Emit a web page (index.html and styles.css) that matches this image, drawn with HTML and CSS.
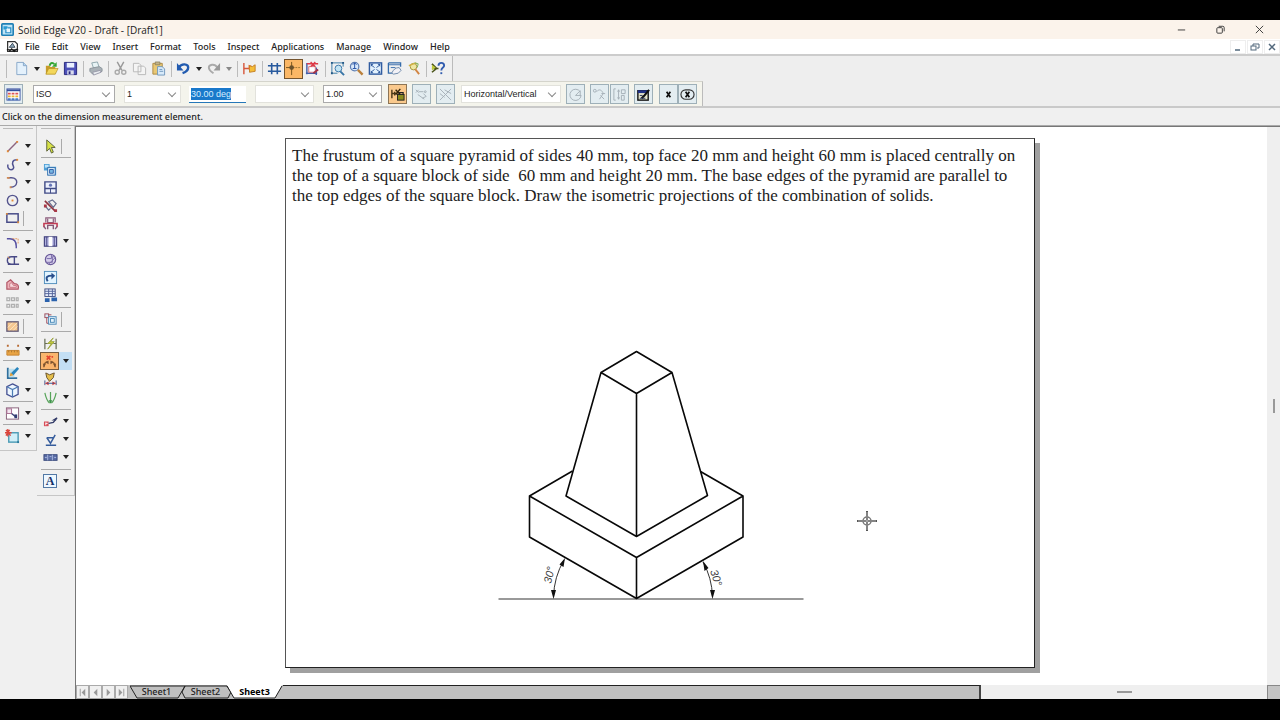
FILE: index.html
```html
<!DOCTYPE html>
<html lang="en">
<head>
<meta charset="utf-8">
<title>Solid Edge V20 - Draft - [Draft1]</title>
<link rel="stylesheet" href="styles.css">
</head>
<body>
<div class="app">
<header class="titlebar">
  <svg class="ico" viewBox="0 0 16 16"><rect x="1" y="1" width="14" height="14" rx="1" fill="#bfe4f5" stroke="#1f7fb5" stroke-width="2"/><path d="M3 4h5v4H3z" fill="#2b9bd3"/><path d="M8 6h4v6H6V8" stroke="#2b8fc8" fill="#e8f6fc" stroke-width="1.500"/></svg>
  <h1>Solid Edge V20 - Draft - [Draft1]</h1>
  <div class="winbtns">
    <button aria-label="Minimize"><svg viewBox="0 0 12 12"><path d="M2 6.500h8" /></svg></button>
    <button aria-label="Restore"><svg viewBox="0 0 12 12"><rect x="2" y="4" width="6" height="6" rx="1"/><path d="M4 2.500h4.500a1.500 1.500 0 0 1 1.500 1.500v4"/></svg></button>
    <button aria-label="Close"><svg viewBox="0 0 12 12"><path d="M2 2l8 8M10 2l-8 8"/></svg></button>
  </div>
</header>
<nav class="menubar">
  <svg class="ico" viewBox="0 0 16 16"><path d="M2 2h9l3 3v9H2z" fill="#fff" stroke="#333" stroke-width="1.500"/><path d="M4 9l4-5 3 5z" fill="#8fa9ba" stroke="#234"/><path d="M1 12h14M4 14l3-3 3 3 3-3" stroke="#111" fill="none" stroke-width="1.500"/></svg>
  <button>File</button><button>Edit</button><button>View</button><button>Insert</button><button>Format</button><button>Tools</button><button>Inspect</button><button>Applications</button><button>Manage</button><button>Window</button><button>Help</button>
  <div class="docbtns">
    <button aria-label="Minimize document"><svg viewBox="0 0 12 12"><path d="M3 9h5"/></svg></button>
    <button aria-label="Restore document"><svg class="thin" viewBox="0 0 12 12"><rect x="2" y="5" width="5" height="4"/><path d="M4 3h6v4H8M4 3v2"/></svg></button>
    <button aria-label="Close document"><svg viewBox="0 0 12 12"><path d="M3 3l6 6M9 3l-6 6"/></svg></button>
  </div>
</nav>

<div class="bars">
<div class="toolbar main-tools">
  <button class="tool" aria-label="New"><svg viewBox="0 0 16 16"><path d="M3 1.500h7l3.500 3.500v9.500H3z" fill="#e4f1fc" stroke="#86a6c8"/><path d="M10 1.500V5h3.500" fill="#b8d6f1" stroke="#86a6c8"/></svg></button>
  <button class="drop" aria-label="New options"></button>
  <button class="tool" aria-label="Open"><svg viewBox="0 0 16 16"><path d="M2 5h4l1 1.500h5V14H2z" fill="#c79b28"/><path d="M2 14l3-6h10l-3 6z" fill="#f3d75a" stroke="#b38f25" stroke-width=".7"/><path d="M6 5c1-4 4-3 5-1.500" fill="none" stroke="#33a533" stroke-width="2"/><path d="M13.500 1v5h-5z" fill="#33a533"/></svg></button>
  <button class="tool" aria-label="Save"><svg viewBox="0 0 16 16"><path d="M1.500 1.500h13v13h-13z" fill="#4c50b8" stroke="#26267c"/><path d="M4 2h8v5H4z" fill="#eaf0ff"/><path d="M4.500 10h7v4.500h-7z" fill="#d9dcee"/><path d="M6 11h2v3H6z" fill="#26267c"/></svg></button>
  <i class="vsep"></i>
  <button class="tool" aria-label="Print"><svg viewBox="0 0 16 16"><path d="M4 2l6-1 2 6-6 1z" fill="#e7f3f5" stroke="#8da5ac"/><path d="M2 8l10-2 3 2v3l-10 3-3-3z" fill="#a9b1b7" stroke="#8a939a"/><path d="M5 12l8-2 1 2-8 3z" fill="#e9edf0" stroke="#99a"/></svg></button>
  <i class="vsep"></i>
  <button class="tool" aria-label="Cut"><svg viewBox="0 0 16 16"><path d="M4.500 1l5 9M11.500 1l-5 9" stroke="#999" stroke-width="1.500"/><circle cx="4.500" cy="12" r="2.200" fill="none" stroke="#aaa" stroke-width="1.500"/><circle cx="11.500" cy="12" r="2.200" fill="none" stroke="#aaa" stroke-width="1.500"/></svg></button>
  <button class="tool" aria-label="Copy"><svg viewBox="0 0 16 16"><path d="M1.500 2.500h6l2 2v7h-8zM6.500 5.500h6l2 2v7h-8z" fill="#f4f4f4" stroke="#b9b9b9"/></svg></button>
  <button class="tool" aria-label="Paste"><svg viewBox="0 0 16 16"><path d="M2 2.500h10V14H2z" fill="#e9c874" stroke="#ad8a44"/><path d="M4.500 1h5v3h-5z" fill="#c4b387" stroke="#7c7455" stroke-width=".7"/><path d="M7 6h5l2.500 2.500V15H7z" fill="#d8eafa" stroke="#7097bd"/><path d="M9 9h3M9 11h4" stroke="#7097bd"/></svg></button>
  <i class="vsep"></i>
  <button class="tool" aria-label="Undo"><svg viewBox="0 0 16 16"><path d="M3 7c3-5 10-4 10 0 0 4-3 5-6 6" fill="none" stroke="#225bb0" stroke-width="2.500"/><path d="M1 2v8h7z" fill="#225bb0"/></svg></button>
  <button class="drop" aria-label="Undo history"></button>
  <button class="tool" aria-label="Redo"><svg viewBox="0 0 16 16"><path d="M12 7c-3-5-9-3-9 0 0 3 2 4 5 6" fill="none" stroke="#aaa" stroke-width="2"/><path d="M15 2v8H8z" fill="#999"/></svg></button>
  <button class="drop dim-arrow" aria-label="Redo history"></button>
  <i class="vsep"></i>
  <button class="tool" aria-label="Relationship assistant"><svg viewBox="0 0 16 16"><path d="M2 2v12M2 8h6" stroke="#d6563c" stroke-width="1.500"/><path d="M7 4l3 1v4H7z" fill="#e86a27"/><path d="M8 8V5l3 1 3-2v7l-6 1z" fill="#f5bd38" stroke="#c47f24"/></svg></button>
  <i class="vsep"></i>
  <button class="tool" aria-label="Grid"><svg viewBox="0 0 16 16"><path d="M5 2v12M11 2v12M1 5h14M1 11h14" stroke="#285a9e" stroke-width="1.700"/></svg></button>
  <button class="tool active" aria-label="Snap to grid"><svg viewBox="0 0 16 16"><path d="M6 1v14M0 7h9" stroke="#75531d"/><path d="M10 7h6" stroke="#9c7434" stroke-dasharray="2 1"/><circle cx="6" cy="7" r="2.500" fill="#6b512b"/></svg></button>
  <button class="tool" aria-label="Reposition origin"><svg viewBox="0 0 16 16"><path d="M2 2v12M1 13h12M12 7v8" stroke="#435da8" stroke-width="1.500"/><path d="M4 6h7v6H4z" fill="#fff" stroke="#d26b79"/><path d="M6 1l5 5M11 1L6 6M2 3h12" stroke="#dd3947" stroke-width="1.500"/><path d="M9 13l5-4" stroke="#a33246" stroke-width="2"/></svg></button>
  <i class="vsep"></i>
  <button class="tool" aria-label="Zoom area"><svg viewBox="0 0 16 16"><path d="M2 2h12M2 2v11M14 2v4M2 13h6" stroke="#3579a4"/><circle cx="9" cy="8" r="3.600" fill="#c2e4f4" stroke="#3975a7"/><path d="M11 11l4 4" stroke="#3975a7" stroke-width="2"/><path d="M1 1h2v2H1zM13 1h2v2h-2zM1 12h2v2H1z" fill="#225584"/></svg></button>
  <button class="tool" aria-label="Zoom"><svg viewBox="0 0 16 16"><circle cx="6" cy="6" r="4.500" fill="#d9e9fb" stroke="#5f7fb4" stroke-width="1.300"/><path d="M6 2v6M4 4l2-2 2 2M4 8h4" stroke="#2551a5" fill="none"/><path d="M9.500 9.500l5 5" stroke="#ba803c" stroke-width="2.500"/></svg></button>
  <button class="tool" aria-label="Fit"><svg viewBox="0 0 16 16"><rect x="1.500" y="2" width="13" height="12" fill="#e2f1fd" stroke="#315ca0" stroke-width="1.500"/><path d="M3 4l4 3M13 4L9 7M3 12l4-3M13 12L9 9" stroke="#315ca0"/><path d="M3 3h3L3 6zM13 3h-3l3 3zM3 13h3l-3-3zM13 13h-3l3-3z" fill="#315ca0"/></svg></button>
  <button class="tool" aria-label="Pan"><svg viewBox="0 0 16 16"><path d="M1.500 2h13v4M1.500 2v11h4" fill="none" stroke="#366cab" stroke-width="1.400"/><path d="M2 4h12M4 7h5" stroke="#366cab"/><path d="M5 13c2-4 4-6 8-6l2 3-3 3-5 1z" fill="#f2f1f6" stroke="#6c87aa"/></svg></button>
  <button class="tool" aria-label="Zoom tool"><svg viewBox="0 0 16 16"><circle cx="8" cy="6" r="3.500" fill="#eee7a4" stroke="#a2953b"/><path d="M3 5l8-3" stroke="#d4b243" stroke-width="1.500"/><path d="M10 9l4 5" stroke="#d28542" stroke-width="2"/><path d="M9 2l4 1-1 4" stroke="#7bae53" fill="none"/></svg></button>
  <i class="vsep"></i>
  <button class="tool" aria-label="Help"><svg viewBox="0 0 16 16"><path d="M1 3l5 5-5 4M1 8h7" stroke="#4b541a" stroke-width="1.700" fill="none"/><path d="M1 4l4 3-4 3z" fill="#bfca3b"/><path d="M8 5c0-4 6-4 6 0 0 2-3 2-3 5" fill="none" stroke="#315caf" stroke-width="2"/><path d="M10 12h2v2h-2z" fill="#315caf"/></svg></button>
</div>

<div class="toolbar ribbon">
  <button class="rb" aria-label="Styles"><svg viewBox="0 0 16 16"><rect x="1" y="2" width="14" height="12" fill="#fff" stroke="#4359a5"/><path d="M1 3.500h14" stroke="#334e9c" stroke-width="2"/><path d="M2 7h12" stroke="#d55" stroke-width="2" stroke-dasharray="3 1"/><path d="M2 10h12" stroke="#e8b534" stroke-width="2" stroke-dasharray="3 1"/><path d="M2 13h12" stroke="#487bc4" stroke-width="2" stroke-dasharray="3 1"/></svg></button>
  <label class="combo w-iso strong"><select aria-label="Dimension style"><option>ISO</option></select></label>
  <label class="combo w-num"><select aria-label="Scale"><option>1</option></select></label>
  <label class="angle"><span class="sel">30.00 deg</span><input aria-label="Angle" type="text"></label>
  <label class="combo w-num wide"><select aria-label="Tolerance"><option></option></select></label>
  <label class="combo w-num wide strong"><select aria-label="Spacing"><option>1.00</option></select></label>
  <div class="rgroup">
  <button class="rb active" aria-label="Lock dimension"><svg viewBox="0 0 16 16"><path d="M2 3v9M2 7h6M5 5v4" stroke="#493817" stroke-width="1.500"/><path d="M6 3l5 5M11 2L6 8" stroke="#30240a" stroke-width="1.500"/><rect x="8" y="8" width="7" height="6" fill="#8a8c1e" stroke="#222"/><path d="M10 8V6h4v2" fill="none" stroke="#222" stroke-width="1.300"/></svg></button>
  <button class="rb" aria-label="Dimension axis"><svg class="faded" viewBox="0 0 16 16"><path d="M2 3l3 3M2 6l3-3M5 5h5M9 12l4-2M4 8l7 5M10 7l3 3"/><circle cx="12" cy="5" r="1"/></svg></button>
  <button class="rb" aria-label="Intersection"><svg class="faded" viewBox="0 0 16 16"><path d="M2 2l12 12M14 2L2 14M7 3l7 4M2 7l5 4"/></svg></button>
  </div>
  <label class="combo w-orient"><select aria-label="Orientation"><option>Horizontal/Vertical</option></select></label>
  <button class="rb" aria-label="Major minor"><svg class="faded" viewBox="0 0 16 16"><path d="M13 5a6 6 0 1 0 1 4H8l5-5v5" /></svg></button>
  <button class="rb" aria-label="Arc angle"><svg class="faded" viewBox="0 0 16 16"><circle cx="3" cy="4" r="1.500"/><path d="M5 5c3-4 6-1 7 2l-4 6M9 9l4 4M10 7h4"/></svg></button>
  <button class="rb joined" aria-label="Dual dimension"><svg class="faded" viewBox="0 0 16 16"><path d="M4 2H2v12h2M7 3v10M6 5l1-2 1 2M6 11l1 2 1-2M10 3h4v4h-4zM10 9h3v5h-3z"/></svg></button>
  <button class="rb" aria-label="Properties"><svg viewBox="0 0 16 16"><rect x="2" y="4" width="11" height="10" fill="#e6e6cc" stroke="#111" stroke-width="1.500"/><path d="M2 5h10" stroke="#223285" stroke-width="3"/><path d="M6 12l3-3 5-6" stroke="#111" stroke-width="2.200" fill="none"/><path d="M4 9h3M4 12h6" stroke="#22305a"/></svg></button>
  <button class="rb last" aria-label="Tolerance type"><svg viewBox="0 0 16 16"><path d="M6 5l4 6M10 5l-4 6" stroke="#111" stroke-width="1.800"/></svg></button>
  <button class="rb flush" aria-label="Inspection"><svg viewBox="0 0 16 16"><rect x="1" y="3" width="14" height="10" rx="5" fill="none" stroke="#333" stroke-width="1.200"/><path d="M6 5l4 6M10 5l-4 6" stroke="#111" stroke-width="1.800"/></svg></button>
</div>
</div>

<div class="prompt" role="status">Click on the dimension measurement element.</div>

<main class="workspace">
<aside class="palettes">
<div class="palette draw">
  <div class="row"><button aria-label="Line"><svg viewBox="0 0 16 16"><path d="M3 13L13 3" stroke="#8b6480" stroke-width="1.500"/><path d="M2 12h2v2H2zM12 2h2v2h-2z" fill="#e28a37"/></svg></button><button class="drop" aria-label="Line options"></button></div>
  <div class="row"><button aria-label="Curve"><svg viewBox="0 0 16 16"><path d="M3 8c-1 8 8 6 6 2S8 3 13 3" fill="none" stroke="#4f5190" stroke-width="1.600"/><path d="M12 2h2v2h-2z" fill="#e28a37"/></svg></button><button class="drop" aria-label="Curve options"></button></div>
  <div class="row"><button aria-label="Arc"><svg viewBox="0 0 16 16"><path d="M3 3h4c8 0 7 10-1 10" fill="none" stroke="#55548e" stroke-width="1.500"/><path d="M2 2h3v2H2zM5 12h2v2H5z" fill="#d18a54"/></svg></button><button class="drop" aria-label="Arc options"></button></div>
  <div class="row"><button aria-label="Circle"><svg viewBox="0 0 16 16"><circle cx="8" cy="8" r="5.500" fill="none" stroke="#55558e" stroke-width="1.500"/><path d="M7 7h2v2H7z" fill="#e28a37"/></svg></button><button class="drop" aria-label="Circle options"></button></div>
  <div class="row"><button aria-label="Rectangle"><svg viewBox="0 0 16 16"><rect x="2" y="3" width="12" height="9" fill="none" stroke="#484c88" stroke-width="1.600"/><path d="M1 2h2v2H1zM13 11h2v2h-2z" fill="#d48946"/></svg></button><i class="bar"></i></div>
  <hr>
  <div class="row"><button aria-label="Fillet"><svg viewBox="0 0 16 16"><path d="M2 4h3c5 0 7 3 7 8v2" fill="none" stroke="#544ea0" stroke-width="1.500"/><path d="M8 4h6v5" fill="none" stroke="#e49357" stroke-dasharray="2 1"/></svg></button><button class="drop" aria-label="Fillet options"></button></div>
  <div class="row"><button aria-label="Trim"><svg viewBox="0 0 16 16"><path d="M13 4H7c-6 0-6 8 0 8h6M10 4v8M3 12h12" fill="none" stroke="#484986" stroke-width="1.500"/><path d="M3 4l2 2" stroke="#e0893d"/></svg></button><button class="drop" aria-label="Trim options"></button></div>
  <hr>
  <div class="row"><button aria-label="Offset"><svg viewBox="0 0 16 16"><path d="M2 13V6l4-3 4 4c4 0 5 3 4 6z" fill="#efb2ba" stroke="#b25867" stroke-width="1.300"/><path d="M5 11V7l2-1 2 3h3v2z" fill="#f8d8dc" stroke="#c77782"/></svg></button><button class="drop" aria-label="Offset options"></button></div>
  <div class="row"><button aria-label="Pattern"><svg viewBox="0 0 16 16"><g fill="none" stroke="#b0b0b0" stroke-width="1.300"><rect x="2" y="3" width="3" height="3"/><rect x="7" y="3" width="3" height="3"/><rect x="12" y="3" width="2" height="3"/><rect x="2" y="10" width="3" height="3"/><rect x="7" y="10" width="3" height="3"/><rect x="12" y="10" width="2" height="3"/></g></svg></button><button class="drop" aria-label="Pattern options"></button></div>
  <hr>
  <div class="row"><button aria-label="Fill"><svg viewBox="0 0 16 16"><rect x="2" y="3" width="12" height="10" fill="#f6c790" stroke="#625a77" stroke-width="1.400"/><path d="M3 9l5-5M5 12l8-8M9 12l4-4" stroke="#fbe6c8"/></svg></button><i class="bar"></i></div>
  <hr class="tight">
  <div class="row"><button aria-label="Measure"><svg viewBox="0 0 16 16"><path d="M2 9h13v5H2z" fill="#e9a444" stroke="#c78430"/><path d="M4 9v2M7 9v2M10 9v2M13 9v2" stroke="#a87530"/><path d="M2 3h2v2H2zM13 3h2v2h-2z" fill="#b86b34"/></svg></button><button class="drop" aria-label="Measure options"></button></div>
  <hr class="tight">
  <div class="row"><button aria-label="Sketch"><svg viewBox="0 0 16 16"><path d="M3 3v11h10" fill="none" stroke="#30709e" stroke-width="2"/><path d="M4 4h6v9H4z" fill="#bce0ef"/><path d="M6 9l7-7 2 2-6 7z" fill="#2a85bd"/><path d="M5 12l1-4 3 3z" fill="#e59e35"/></svg></button></div>
  <div class="row"><button aria-label="3D view"><svg viewBox="0 0 16 16"><path d="M8 1l6 3v8l-6 3-6-3V4z" fill="#eef7ff" stroke="#465293" stroke-width="1.400"/><path d="M2 4l6 3 6-3M8 7v8" fill="none" stroke="#4c7cb5" stroke-width="1.300"/></svg></button><button class="drop" aria-label="3D view options"></button></div>
  <hr class="tight">
  <div class="row"><button aria-label="Scale"><svg viewBox="0 0 16 16"><rect x="1.500" y="2" width="13" height="12" fill="#fff" stroke="#865f78"/><rect x="2" y="3" width="5" height="5" fill="#f3e7f0" stroke="#a86c90"/><path d="M7 8l5 4" stroke="#3d4176" stroke-width="1.500"/><path d="M10 9h3v4h-3z" fill="#333d73"/></svg></button><button class="drop" aria-label="Scale options"></button></div>
  <hr class="tight">
  <div class="row"><button aria-label="Create block"><svg viewBox="0 0 16 16"><rect x="4" y="4" width="10" height="10" fill="#d1eff8" stroke="#4b9bb5" stroke-width="1.500"/><path d="M3 0v8M0 4h7M1 1l5 6M5 1L1 7" stroke="#db443b" stroke-width="1.400"/><path d="M13 13h2v2h-2z" fill="#29799d"/></svg></button><button class="drop" aria-label="Block options"></button></div>
</div>

<div class="palette detail">
  <div class="row"><button aria-label="Select"><svg viewBox="0 0 16 16"><path d="M4 1v12l3-3 2 5 2-1-2-5h4z" fill="#d7e247" stroke="#5a6038"/></svg></button><i class="bar"></i></div>
  <hr class="tight">
  <div class="row"><button aria-label="View wizard"><svg viewBox="0 0 16 16"><path d="M1 2h6v3h7v9H5V9H1z" fill="#4d9ed5"/><path d="M2 3h4v3H2z" fill="#bce3fa"/><rect x="5" y="6" width="8" height="8" fill="#e2f2fd" stroke="#2f6dad"/><path d="M7 8h4v4H7z" fill="#77b8e4" stroke="#315da5"/></svg></button></div>
  <div class="row"><button aria-label="Principal view"><svg viewBox="0 0 16 16"><path d="M2 2h12v12H2zM2 9h12" fill="#edf1fc" stroke="#404b86" stroke-width="1.500"/><path d="M8 9v5" stroke="#404b86"/><circle cx="8" cy="5.500" r="1.700" fill="#6575b6"/></svg></button></div>
  <div class="row"><button aria-label="Auxiliary view"><svg viewBox="0 0 16 16"><path d="M2 3l11 11" stroke="#8c3340" stroke-width="1.700"/><path d="M6 4l4-2 4 4-3 4zM2 8l4 5 2-2" fill="none" stroke="#666d8e" stroke-width="1.300"/><path d="M1 7h3v3H1zM12 12h3v3h-3z" fill="#a93745"/></svg></button></div>
  <div class="row"><button aria-label="Cutting plane"><svg viewBox="0 0 16 16"><path d="M3 7V2h10v5M5 3v4h6V3" fill="none" stroke="#8c5c7c" stroke-width="1.300"/><path d="M1 12V8h14v4" fill="none" stroke="#c23c54" stroke-width="1.700"/><path d="M1 11l2 3M15 11l-2 3M5 14v-4h6v4" stroke="#865978" stroke-width="1.500" fill="none"/></svg></button></div>
  <div class="row"><button aria-label="Section view"><svg viewBox="0 0 16 16"><rect x="1.500" y="3" width="13" height="10" fill="#b1b2e1" stroke="#474781" stroke-width="1.300"/><path d="M6 3h4v10H6z" fill="#fff"/><path d="M4 3v10M12 3v10" stroke="#474781"/></svg></button><button class="drop" aria-label="Section options"></button></div>
  <div class="row"><button aria-label="Detail view"><svg viewBox="0 0 16 16"><circle cx="8" cy="8" r="5.500" fill="#d6cfeb" stroke="#6b5b9a" stroke-width="1.300"/><path d="M4 7h5V3M3 11h7V5h3M6 13l7-7" fill="none" stroke="#796ba7"/></svg></button></div>
  <div class="row"><button aria-label="Update views"><svg viewBox="0 0 16 16"><rect x="1.500" y="1.500" width="13" height="13" fill="#e2f4ff" stroke="#4f8dbb"/><path d="M5 12c-3-5 0-6 5-6" fill="none" stroke="#284e8c" stroke-width="2"/><path d="M9 3l4 3-4 4z" fill="#284e8c"/></svg></button></div>
  <div class="row"><button aria-label="Parts list"><svg viewBox="0 0 16 16"><rect x="2" y="1" width="11" height="8" fill="#e7effd" stroke="#414d80"/><path d="M2 3.500h11M2 6h11M6 1v8M10 1v8" stroke="#52639a"/><path d="M2 11h5v4H2zM9 10h6v4H9z" fill="#2b62ad"/></svg></button><button class="drop" aria-label="Parts list options"></button></div>
  <hr>
  <div class="row"><button aria-label="Retrieve dimensions"><svg viewBox="0 0 16 16"><rect x="2" y="2" width="4" height="4" fill="#dcecf8" stroke="#9d4b5a"/><path d="M4 6v6h4M6 3h3" stroke="#9d4b5a" fill="none"/><rect x="6" y="5" width="8" height="8" fill="#e7f5fd" stroke="#4988b7"/><rect x="8" y="7" width="4" height="4" fill="none" stroke="#4988b7"/></svg></button><i class="bar"></i></div>
  <hr>
  <div class="row"><button aria-label="Smart dimension"><svg viewBox="0 0 16 16"><path d="M2 3v11M14 3v11M2 8h3M11 8h3" stroke="#686e56" stroke-width="1.300"/><path d="M11 2L5 8h4l-4 6 7-8H8z" fill="#c6cf3a" stroke="#8f982a" stroke-width=".8"/></svg></button></div>
  <div class="row on"><button class="active" aria-label="Angle between"><svg viewBox="0 0 16 16"><path d="M5 2l4 4M9 2L5 6M11 2v2" stroke="#e3442f" stroke-width="1.700"/><path d="M2 14c0-3 1-5 4-6M14 14c0-3-1-5-4-6" stroke="#94612d" fill="none" stroke-width="1.500"/><path d="M1 10l3 1-2 3zM15 10l-3 1 2 3zM7 7v4L4 9zM9 7v4l3-2z" fill="#795131"/></svg></button><button class="drop" aria-label="Dimension options"></button></div>
  <div class="row"><button aria-label="Attach dimension"><svg viewBox="0 0 16 16"><path d="M3 1l4 2 5-2-1 5-4 4-3-4z" fill="#e4be4c" stroke="#65502e"/><path d="M2 14V9M14 14V9" stroke="#3c4f86"/><path d="M2 12l4-2v4zM14 12l-4-2v4z" fill="#dc3c36"/><path d="M4 12h8" stroke="#38518d"/></svg></button></div>
  <div class="row"><button aria-label="Symmetric diameter"><svg viewBox="0 0 16 16"><path d="M2 3c1 5 2 8 5 11M14 3c-1 5-2 8-5 11M8 2v12" fill="none" stroke="#57a45a" stroke-width="1.300"/><path d="M6 11l2 3 2-3z" fill="#3b914a"/></svg></button><button class="drop" aria-label="Symmetric options"></button></div>
  <hr>
  <div class="row"><button aria-label="Callout"><svg viewBox="0 0 16 16"><path d="M1 8h5v5H1z" fill="#d84d58"/><path d="M3 10h2M3 9v3" stroke="#fff"/><path d="M6 10l5-1 4-5" stroke="#343d69" fill="none" stroke-width="1.500"/><path d="M9 7h5V4z" fill="#343d69"/></svg></button><button class="drop" aria-label="Callout options"></button></div>
  <div class="row"><button aria-label="Surface texture"><svg viewBox="0 0 16 16"><path d="M4 6l4 6 5-9M4 6h7M3 14h11" fill="none" stroke="#355c9c" stroke-width="1.600"/></svg></button><button class="drop" aria-label="Texture options"></button></div>
  <div class="row"><button aria-label="Feature control frame"><svg viewBox="0 0 16 16"><rect x="1" y="5" width="14" height="6" fill="#5d6fa8" stroke="#354779"/><path d="M5 5v6M10 5v6M2 8h2M7 7h2M12 8h2" stroke="#a9b8e0"/></svg></button><button class="drop" aria-label="Frame options"></button></div>
  <hr>
  <div class="row"><button class="texttool" aria-label="Text"><span>A</span></button><button class="drop" aria-label="Text options"></button></div>
</div>
</aside>

<section class="docview">
  <div class="viewport">
    <article class="sheet">
      <p>The frustum of a square pyramid of sides 40 mm, top face 20 mm and height 60 mm is placed centrally on
the top of a square block of side  60 mm and height 20 mm. The base edges of the pyramid are parallel to
the top edges of the square block. Draw the isometric projections of the combination of solids.</p>
      <svg class="drawing" viewBox="498 350 306 252" role="img" aria-label="Isometric projection of a frustum on a square block">
        <path d="M498.500 599H803.500" stroke="#777" stroke-width="1.500"/>
        <g fill="none" stroke="#080808" stroke-width="1.600" stroke-linejoin="round">
          <path d="M636.500 351.500L672 372.500 636.500 393.500 601 372.500zM636.500 393.500V536.500M601 372.500L566 496 636.500 536.500 707.500 495.500 672 372.500"/>
          <path d="M572.500 471L529.500 496 636.500 557.500 743 496 700.500 471.500M529.500 496V537L636.500 598.500 743 537V496M636.500 557.500V598.500"/>
        </g>
        <path d="M564 560Q554 577 553.500 597M703 562Q712 578 712.500 597" fill="none" stroke="#333"/>
        <path d="M565 558l-1.500 9-4-2.500zM553.500 599l-2.500-9h5zM703 561l5.500 7-4 3zM712.500 599l-2.500-9h5z" fill="#111"/>
        <text class="dim" transform="translate(551 584) rotate(-77)">30°</text>
        <text class="dim" transform="translate(710 571) rotate(72)">30°</text>
      </svg>
    </article>
    <svg class="cursor" viewBox="0 0 22 22"><circle cx="11" cy="11" r="4" fill="none" stroke="#777" stroke-width="1.500"/><path d="M11 1v20M1 11h20" stroke="#555" stroke-width="2"/><path d="M11 2v18M2 11h18" stroke="#ddd" stroke-width=".7"/></svg>
  </div>
  <div class="vscroll"><i></i></div>
  <footer class="sheetbar">
    <div class="sheetnav">
      <button aria-label="First sheet"><svg viewBox="0 0 12 12"><path d="M3 2v8h1V2zM9 2v8L5 6z"/></svg></button>
      <button aria-label="Previous sheet"><svg viewBox="0 0 12 12"><path d="M8 2v8L4 6z"/></svg></button>
      <button aria-label="Next sheet"><svg viewBox="0 0 12 12"><path d="M4 2v8l4-4z"/></svg></button>
      <button aria-label="Last sheet"><svg viewBox="0 0 12 12"><path d="M3 2v8l4-4zM8 2v8h1V2z"/></svg></button>
    </div>
    <div class="tabs">
      <svg class="tabshape" viewBox="0 0 153 14"><path d="M0 1L7 13H48L55 1M52 7L55 13H98L101 7 97 1" fill="#c0c0c0" stroke="#222"/><path d="M97 0L104 13H145L152 0z" fill="#fff"/><path d="M97 1L104 13H145L152 1" fill="none" stroke="#222"/><path d="M0 1H97M52 7L55 1" stroke="#222"/></svg>
      <button>Sheet1</button><button>Sheet2</button><button class="current">Sheet3</button>
    </div>
    <div class="filler"></div>
    <div class="hscroll"><i></i></div>
    <div class="corner"></div>
  </footer>
</section>
</main>
</div>
</body>
</html>
```
FILE: styles.css
```css
* { box-sizing: border-box; }
body { margin: 0; background: #000; font-family: "Noto Sans", "Open Sans", sans-serif; font-size: 9px; font-weight: 500; color: #222; }
button { border: 0; padding: 0; margin: 0; background: none; font: inherit; color: inherit; }
button svg { display: block; }
.app { height: 100vh; padding: 20px 0 21px; display: flex; flex-direction: column; }

.titlebar { display: flex; align-items: center; height: 19px; flex: none; background: #fbf3eb; padding-left: 1px; }
.ico { width: 13px; height: 13px; flex: none; }
.titlebar h1 { margin: 0 0 0 4px; font: 400 10px "Open Sans", sans-serif; white-space: nowrap; }
.winbtns { margin-left: auto; display: flex; padding-right: 1px; }
.winbtns button { width: 39px; display: grid; place-items: center; }
.winbtns svg { width: 11px; height: 11px; fill: none; stroke: #333; stroke-width: 1; }

.menubar { display: flex; align-items: center; height: 15px; flex: none; background: #fff; padding-left: 6px; white-space: nowrap; }
.menubar > button { margin-left: 12px; }
.menubar > .ico + button { margin-left: 6px; }
.docbtns { margin-left: auto; display: flex; gap: 1px; }
.docbtns button { width: 16px; height: 14px; border: 1px solid #eee; display: grid; place-items: center; }
.docbtns svg { width: 12px; height: 12px; fill: none; stroke: #52687c; stroke-width: 1.5; }
.docbtns .thin { stroke-width: 1; }

.bars { flex: none; background: #eee; border-top: 2px solid #ccc; border-bottom: 2px solid #c9c9c9; }
.toolbar { display: flex; align-items: center; width: max-content; border-right: 1px solid #bbb; }
.main-tools { height: 25px; padding: 0 4px 0 6px; background: #f0f0f0; }
.main-tools::before { content: ""; width: 1px; height: 18px; margin-right: 4px; border-left: 1px solid #bbb; }
.tool { width: 19px; height: 20px; display: grid; place-items: center; flex: none; }
.tool svg { width: 15px; height: 15px; }
.tool.active { background: #fbb766; border: 1px solid #74542f; }
.vsep { width: 6px; height: 16px; background: linear-gradient(#bcbcbc, #bcbcbc) center / 1px 100% no-repeat; }
.drop { width: 11px; height: 18px; display: grid; place-items: center; flex: none; }
.drop::before { content: ""; border: 3px solid transparent; border-top: 4px solid #222; border-bottom: 0; }
.drop.dim-arrow::before { border-top-color: #888; }

.ribbon { height: 25px; padding: 0 5px 0 4px; background: #f4f4ec; border-top: 1px solid #d4d4cc; }
.rb { width: 19px; height: 20px; display: grid; place-items: center; border: 1px solid #9eb0b8; background: #e3edf1; margin-left: 5px; flex: none; }
.rb:first-child { margin-left: 0; }
.rb svg { width: 15px; height: 15px; }
.rb.active { background: #fac98c; border-color: #8d7555; }
.rb.joined { margin-left: 1px; }
.rb.last { margin-left: 6px; }
.rb.flush { margin-left: 0; }
.rb .faded { fill: none; stroke: #a4afb6; stroke-width: 1; }
.rgroup { display: flex; margin: 0 6px; }
.combo { position: relative; height: 18px; margin-left: 9px; background: #fff; border: 1px solid #e2e2dc; display: block; }
.combo.strong { border-color: #aaa; }
.combo select { appearance: none; width: 100%; height: 100%; border: 0; background: transparent; font: 9px "Liberation Sans", Arial, sans-serif; color: #222; padding: 0 12px 0 2px; display: block; }
.combo::after { content: ""; position: absolute; right: 5px; top: 4px; width: 5px; height: 5px; border: solid #888; border-width: 0 1px 1px 0; transform: rotate(45deg); pointer-events: none; }
.w-iso { width: 82px; margin-left: 10px; }
.w-num { width: 57px; }
.w-num.wide { width: 59px; }
.w-orient { width: 100px; margin-left: 0; }
.angle { width: 57px; height: 17px; margin-left: 8px; display: flex; align-items: center; background: #fff; border-bottom: 1px solid #2577b8; padding-left: 2px; font: 9px/12px "Liberation Sans", Arial, sans-serif; }
.angle input { min-width: 0; flex: 1; width: 1px; border: 0; padding: 0; height: 12px; background: transparent; font: inherit; }
.sel { background: #1979ca; color: #d4eeff; white-space: nowrap; }

.prompt { height: 17px; flex: none; background: #f0f0f0; padding-left: 2px; line-height: 17px; }

.workspace { flex: 1; min-height: 0; display: flex; background: #f0f0f0; border-top: 1px solid #aaa; }
.palettes { display: flex; align-items: flex-start; flex: none; width: 75px; }
.palette { width: 37px; padding: 2px 0 5px 3px; border-right: 1px solid #c6c6c6; border-bottom: 1px solid #c6c6c6; }
.palette.detail { width: 38px; padding-left: 4px; }
.palette::before { content: ""; display: block; height: 2px; margin: 0 3px 6px 0; border-top: 1px solid #bbb; }
.row { display: flex; align-items: center; height: 18px; }
.row button { width: 18px; height: 18px; display: grid; place-items: center; flex: none; }
.row svg { width: 15px; height: 15px; }
.row .drop { width: 13px; }
.row .active { background: #fab56d; border: 1px solid #765b40; width: 19px; margin-left: -1px; }
.row.on .drop { background: #c3dff4; }
.bar { width: 1px; height: 15px; margin-left: 2px; background: #aaa; }
.palette hr { border: 0; height: 6px; margin: 0 3px 0 0; background: linear-gradient(#aaa, #aaa) center / 100% 1px no-repeat; }
.palette hr.tight { height: 5px; }
.texttool span { border: 1px solid #5278a5; background: #edf7ff; color: #152e67; font: bold 12px/13px "Liberation Serif", serif; width: 14px; height: 14px; display: block; text-align: center; }

.docview { flex: 1; min-width: 0; display: grid; grid-template-columns: 1fr 13px; grid-template-rows: 1fr 14px; border-left: 1px solid #777; border-top: 1px solid #777; }
.viewport { position: relative; background: #fff; padding: 11px 232px 17px 209px; min-width: 0; overflow: hidden; }
.sheet { height: 100%; background: #fff; border: 1px solid #555; border-bottom-color: #222; border-right-color: #222; box-shadow: 5px 5px 0 #a0a0a0; padding: 7px 6px; }
.sheet p { margin: 0; font: 17px/20px "Liberation Serif", "Times New Roman", serif; white-space: pre; color: #1c1c1c; }
.drawing { display: block; width: 306px; height: 252px; margin: 144px 0 0 206px; }
.dim { font: italic 11px "Liberation Sans", Arial, sans-serif; fill: #444; }
.cursor { position: absolute; left: 780px; top: 383px; width: 22px; height: 22px; }
.vscroll { background: #efefef; display: grid; place-items: center; }
.vscroll i { width: 2px; height: 14px; background: #999; }
.sheetbar { grid-column: 1 / 3; display: flex; background: #c0c0c0; min-width: 0; }
.sheetnav { display: flex; }
.sheetnav button { width: 13px; border: 1px solid #aaa; background: #f0f0f0; display: grid; place-items: center; }
.sheetnav svg { width: 11px; height: 11px; fill: #999; }
.tabs { position: relative; display: flex; width: 153px; padding-left: 2px; margin-left: 2px; line-height: 14px; }
.tabs button { position: relative; width: 49px; text-align: center; }
.tabs .current { font-weight: 700; color: #000; }
.tabshape { position: absolute; left: 0; top: 0; width: 153px; height: 14px; }
.filler { flex: 1; border-top: 1px solid #222; border-right: 2px solid #444; }
.hscroll { width: 286px; background: #efefef; display: grid; place-items: center; }
.hscroll i { width: 15px; height: 2px; background: #999; }
.corner { width: 13px; background: #c4c4c4; border-left: 1px solid #888; border-top: 1px solid #888; }
```
